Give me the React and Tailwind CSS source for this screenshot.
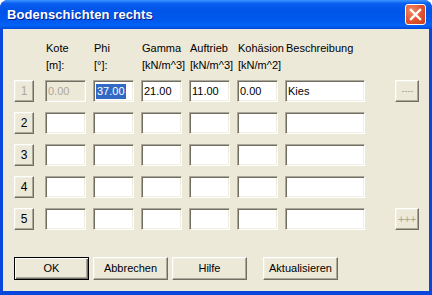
import React from 'react';

const sunken =
  'border border-t-[#ACA899] border-l-[#ACA899] border-b-white border-r-white shadow-[inset_1px_1px_0_#716F64,inset_-1px_-1px_0_#F1EFE2]';
const raised =
  'border border-t-white border-l-white border-b-[#716F64] border-r-[#716F64] shadow-[inset_-1px_-1px_0_#ACA899,inset_1px_1px_0_#F1EFE2] bg-[#ECE9D8]';

const headers = [
  { top: 'Kote', unit: '[m]:' },
  { top: 'Phi', unit: '[°]:' },
  { top: 'Gamma', unit: '[kN/m^3]' },
  { top: 'Auftrieb', unit: '[kN/m^3]' },
  { top: 'Kohäsion', unit: '[kN/m^2]' },
];

const rows = [
  { n: '1', values: ['0.00', '37.00', '21.00', '11.00', '0.00'], text: 'Kies', side: '- - - -', sideCls: 'text-[8px] font-bold tracking-[-1px]' },
  { n: '2', values: ['', '', '', '', ''], text: '' },
  { n: '3', values: ['', '', '', '', ''], text: '' },
  { n: '4', values: ['', '', '', '', ''], text: '' },
  { n: '5', values: ['', '', '', '', ''], text: '', side: '+++', sideCls: 'text-[11px] tracking-[-0.5px]' },
];

const Field = ({ value, width = 'w-[41px]', disabled, selected }) => (
  <div
    className={`${width} h-[22px] mr-[7px] ${sunken} ${disabled ? 'bg-[#ECE9D8] text-[#ACA899]' : 'bg-white text-black'} flex items-center pl-[2px] text-[11px] leading-none`}
  >
    {selected ? <span className="bg-[#316AC5] text-white px-px py-[2px]">{value}</span> : value}
  </div>
);

const DlgButton = ({ label, isDefault, className = '' }) => (
  <div
    className={`w-[75px] h-[23px] flex items-center justify-center text-[11px] ${className} ${
      isDefault
        ? 'border border-black bg-[#ECE9D8] shadow-[inset_1px_1px_0_#fff,inset_-1px_-1px_0_#716F64,inset_-2px_-2px_0_#ACA899]'
        : raised
    }`}
  >
    {label}
  </div>
);

export default function App() {
  return (
    <div className="w-[432px] h-[295px] bg-white font-['Liberation_Sans',Arial,sans-serif] text-black select-none">
      <div className="flex h-full flex-col rounded-t-[8px] overflow-hidden bg-[#0846DC]">
        {/* title bar */}
        <div className="h-[29px] shrink-0 flex items-center justify-between pl-[7px] pr-[6px] bg-[linear-gradient(to_bottom,#3d95ff_0%,#0a5ff0_12%,#0055e8_35%,#0058ee_70%,#0263f5_88%,#0048dc_100%)]">
          <span className="text-white font-bold text-[13px] tracking-[0.1px] [text-shadow:1px_1px_0_#0a1e8a]">
            Bodenschichten rechts
          </span>
          <div className="w-[21px] h-[21px] rounded-[3px] border border-white bg-[radial-gradient(circle_at_30%_30%,#f28a66,#e0532e_55%,#c7401c)] flex items-center justify-center">
            <svg width="13" height="13" viewBox="0 0 13 13">
              <path d="M2 2 L11 11 M11 2 L2 11" stroke="white" strokeWidth="2.4" strokeLinecap="square" />
            </svg>
          </div>
        </div>

        {/* client area */}
        <div className="flex-1 mx-[3px] mb-[4px] bg-[#ECE9D8] pl-[11px] pt-[11px] text-[11px]">
          <div className="flex flex-col leading-[17px] ml-[31px]">
            <div className="flex">
              {headers.map((h) => (
                <span key={h.top} className="w-[48px] pl-[1px] whitespace-nowrap">{h.top}</span>
              ))}
              <span className="pl-[1px]">Beschreibung</span>
            </div>
            <div className="flex">
              {headers.map((h, i) => (
                <span key={i} className="w-[48px] pl-[1px] whitespace-nowrap">{h.unit}</span>
              ))}
            </div>
          </div>

          <div className="flex flex-col gap-[10px] mt-[6px]">
            {rows.map((r) => (
              <div key={r.n} className="flex items-center h-[22px]">
                <div
                  className={`w-[20px] h-[22px] mr-[11px] flex items-center justify-center text-[12px] ${raised} ${
                    r.n === '1' ? 'text-[#ACA899]' : 'text-black'
                  }`}
                >
                  {r.n}
                </div>
                {r.values.map((v, i) => (
                  <Field key={i} value={v} disabled={r.n === '1' && i === 0} selected={r.n === '1' && i === 1} />
                ))}
                <Field value={r.text} width="w-[80px]" />
                {r.side && (
                  <div
                    className={`ml-[23px] w-[24px] h-[22px] flex items-center justify-center whitespace-pre text-[#ACA899] ${r.sideCls} ${raised}`}
                  >
                    {r.side}
                  </div>
                )}
              </div>
            ))}
          </div>

          <div className="flex mt-[27px]">
            <DlgButton label="OK" isDefault />
            <DlgButton label="Abbrechen" className="ml-[4px]" />
            <DlgButton label="Hilfe" className="ml-[4px]" />
            <DlgButton label="Aktualisieren" className="ml-[16px]" />
          </div>
        </div>
      </div>
    </div>
  );
}
